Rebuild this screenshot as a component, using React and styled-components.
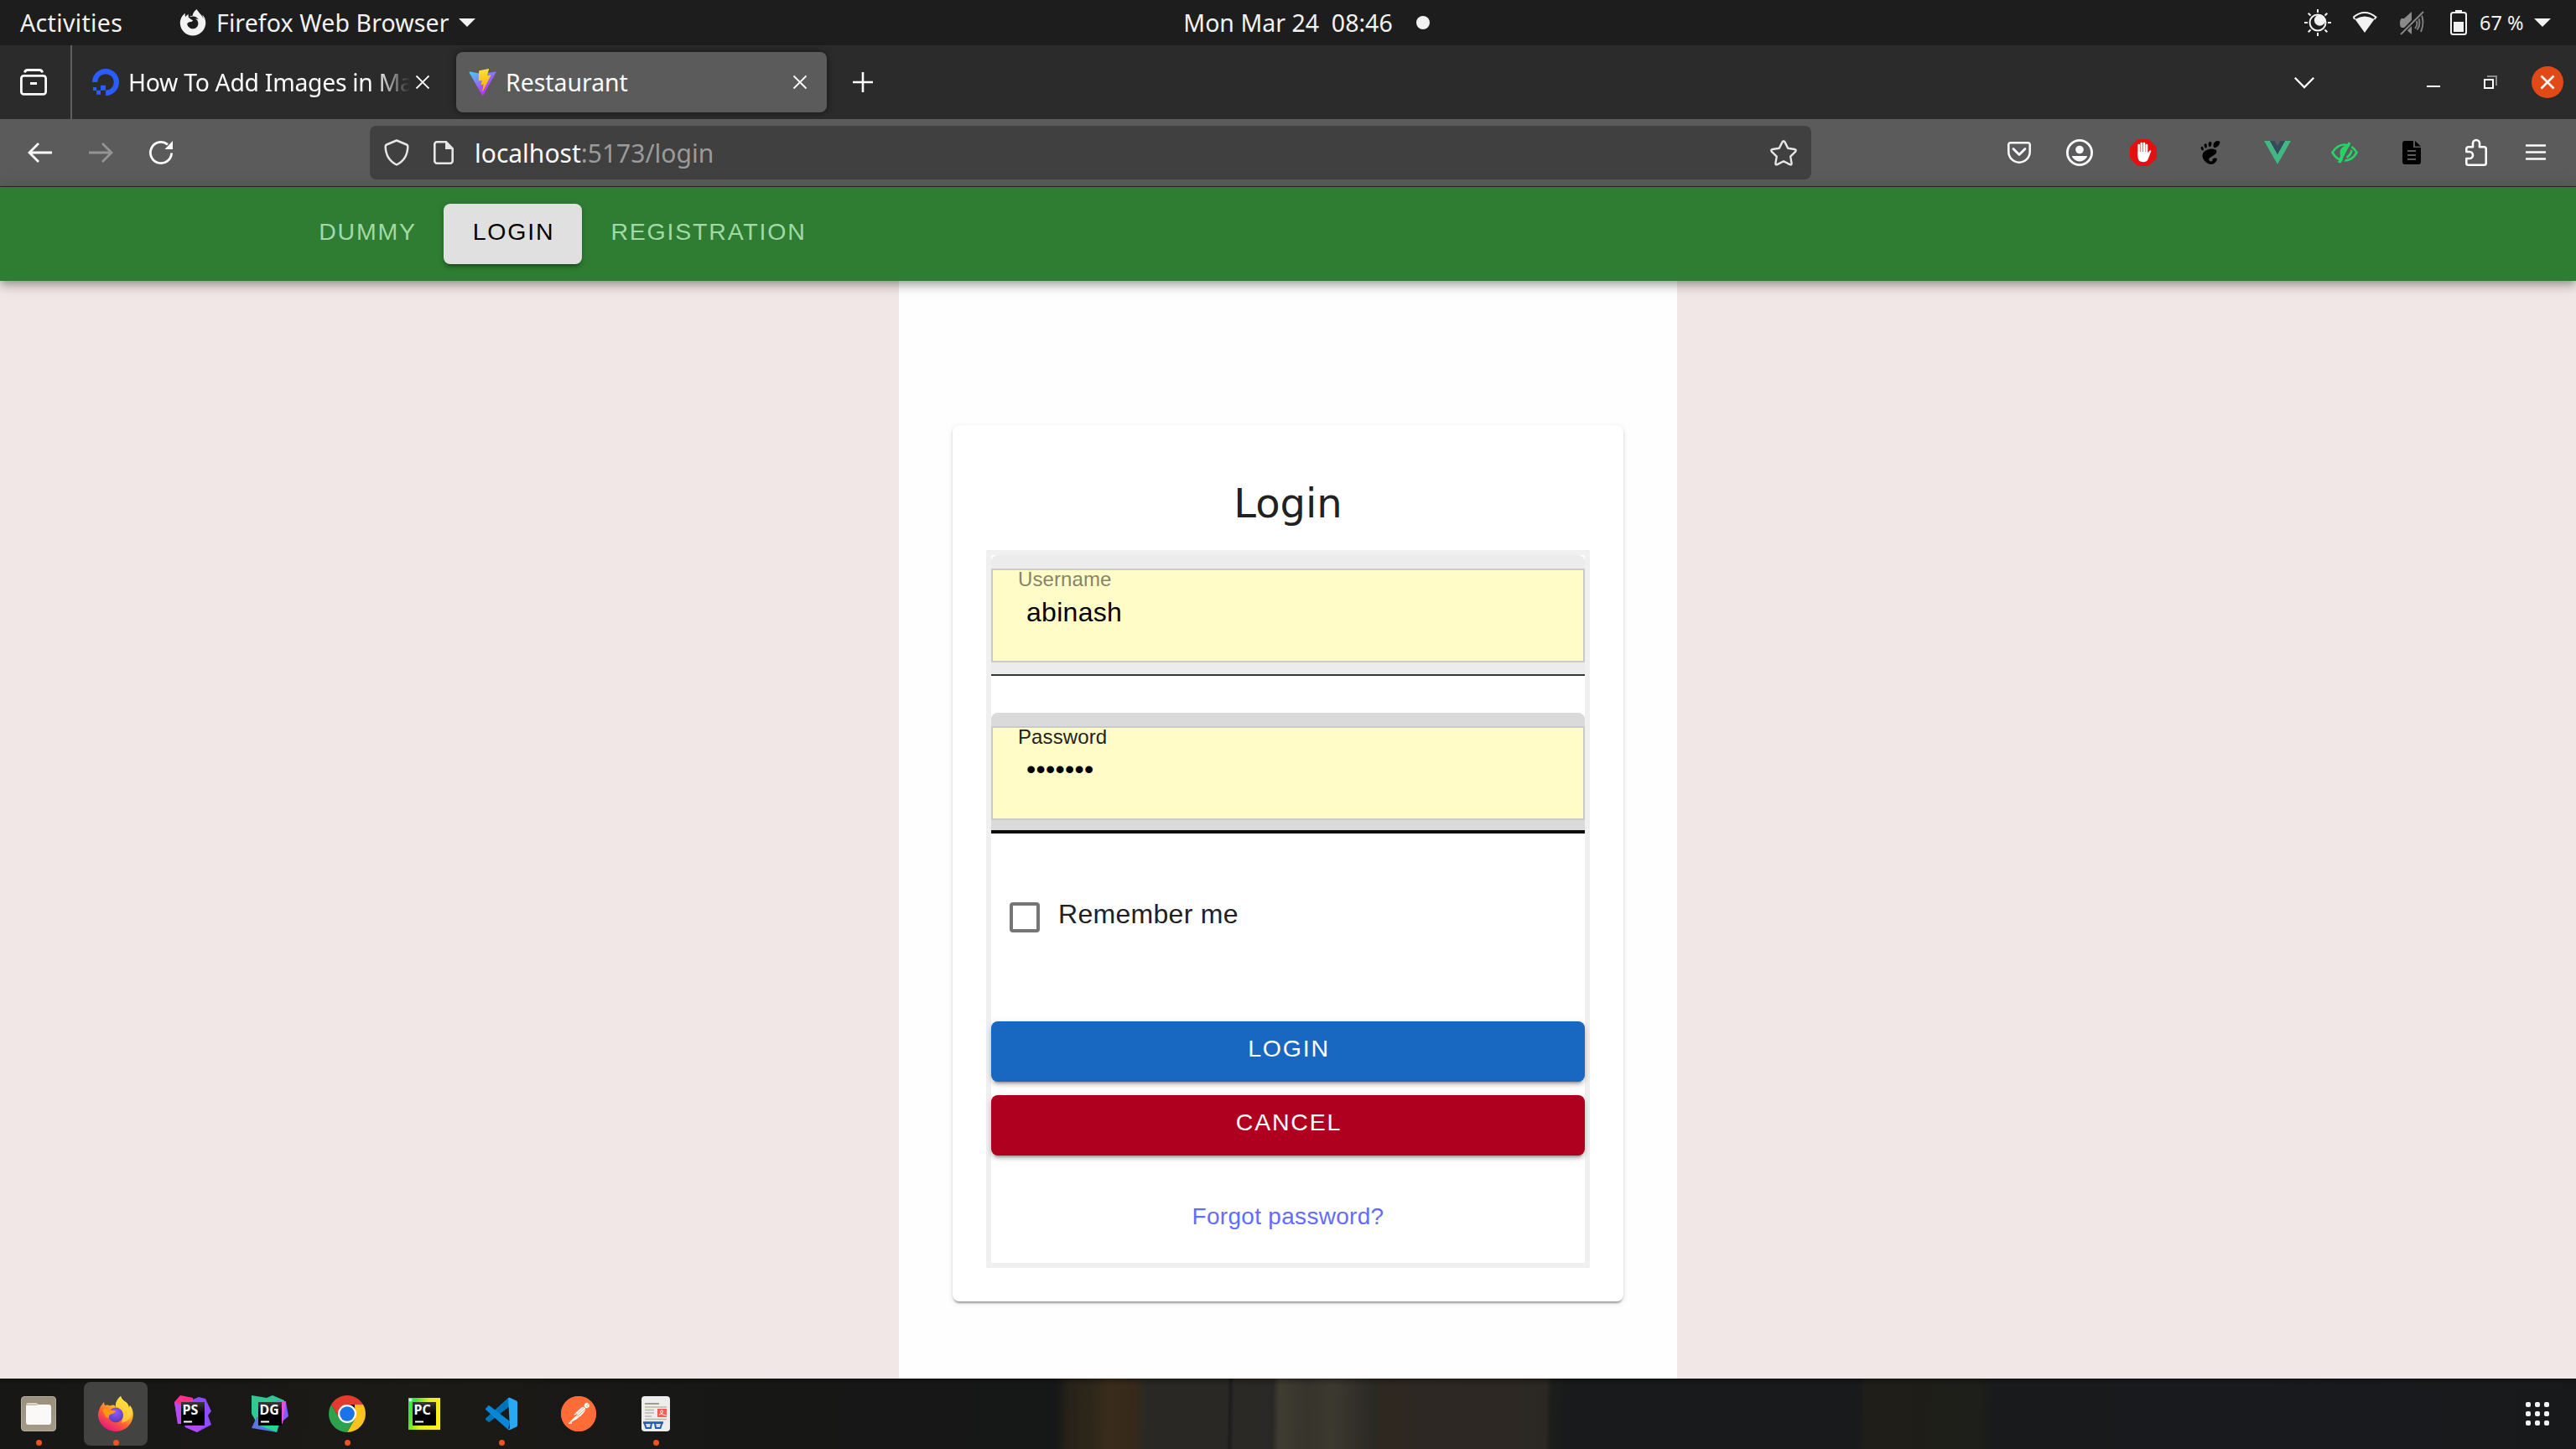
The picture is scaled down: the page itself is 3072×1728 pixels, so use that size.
import React from "react";
import styled, { createGlobalStyle } from "styled-components";
import { FaFirefoxBrowser } from "react-icons/fa";
import { SiGnome, SiPostman } from "react-icons/si";

const UI = `"Noto Sans", "Open Sans", sans-serif`;
const BODY = `"Liberation Sans", Arial, sans-serif`;

const GlobalStyle = createGlobalStyle`
  *, *::before, *::after { box-sizing: border-box; }
  body { margin: 0; background: #f1e7e6; }
`;

const Screen = styled.div`
  width: 3072px;
  height: 1728px;
  display: flex;
  flex-direction: column;
  overflow: hidden;
  font-family: ${BODY};
`;

/* ---------- desktop top bar ---------- */
const TopBar = styled.header`
  flex: none;
  height: 54px;
  display: grid;
  grid-template-columns: 1fr auto 1fr;
  align-items: center;
  background: #1d1d1d;
  color: #f2f2f2;
  font-family: ${UI};
  font-size: 28.5px;
  line-height: 54px;
  white-space: pre;
`;
const TopLeft = styled.div`
  display: flex;
  align-items: center;
  padding-left: 24px;
`;
const Activities = styled.span`
  width: 190px;
  letter-spacing: 0.35px;
`;
const AppMenu = styled.div`
  display: flex;
  align-items: center;
  gap: 11px;
`;
const AppName = styled.span`
  margin-left: 1px;
  letter-spacing: 0.1px;
`;
const Clock = styled.div`
  display: flex;
  align-items: center;
  gap: 28px;
  padding-left: 44px;
`;
const NoticeDot = styled.i`
  width: 16px;
  height: 16px;
  border-radius: 50%;
  background: #f2f2f2;
`;
const TopRight = styled.div`
  display: flex;
  align-items: center;
  justify-content: flex-end;
  padding-right: 30px;
`;
const Percent = styled.span`
  margin-left: 15px;
  width: 55px;
  font-size: 23.5px;
`;
const Pic = styled.svg`
  display: block;
  flex: none;
  width: ${(p) => p.$w}px;
  height: ${(p) => p.$h || p.$w}px;
  margin-left: ${(p) => p.$ml || 0}px;
  overflow: visible;
  fill: none;
`;

/* ---------- browser ---------- */
const TabStrip = styled.div`
  flex: none;
  height: 88px;
  display: flex;
  align-items: center;
  background: #2b2b2b;
  font-family: ${UI};
  font-size: 28.4px;
  color: #fbfbfe;
`;
const RecentTabs = styled.div`
  width: 86px;
  height: 88px;
  padding-left: 24px;
  display: flex;
  align-items: center;
  border-right: 2px solid #5f5f5f;
`;
const Tab = styled.div`
  height: 72px;
  width: ${(p) => p.$w}px;
  display: flex;
  align-items: center;
  padding: 0 ${(p) => p.$pr}px 0 ${(p) => p.$pl}px;
  border-radius: 8px;
  background: ${(p) => (p.$active ? "#5b5b5b" : "transparent")};
  box-shadow: ${(p) => (p.$active ? "0 0 8px rgba(0,0,0,.5)" : "none")};
`;
const TabTitle = styled.span`
  flex: 1;
  min-width: 0;
  margin-left: 11px;
  white-space: nowrap;
  letter-spacing: ${(p) => p.$ls || 0}px;
  mask-image: ${(p) => (p.$fade ? "linear-gradient(to left, transparent, #000 40px)" : "none")};
`;
const WindowControls = styled.div`
  margin-left: auto;
  padding-right: 15px;
  display: flex;
  align-items: center;
`;
const CloseWindow = styled.div`
  width: 38px;
  height: 38px;
  margin-left: 41px;
  display: grid;
  place-items: center;
  border-radius: 50%;
  background: #e14a16;
`;
const Toolbar = styled.div`
  flex: none;
  height: 81px;
  display: flex;
  align-items: center;
  padding: 0 32px 0 33px;
  background: #5b5b5b;
  border-bottom: 1px solid #2e2430;
`;
const NavButtons = styled.div`
  display: flex;
  align-items: center;
  width: 408px;
`;
const UrlBar = styled.div`
  width: 1719px;
  height: 64px;
  display: flex;
  align-items: center;
  padding: 0 17px;
  border-radius: 8px;
  background: #404040;
`;
const Url = styled.span`
  flex: 1;
  margin-left: 25px;
  font-family: ${UI};
  font-size: 30px;
  color: #9b9b9b;
  b { font-weight: 400; color: #fbfbfe; }
`;
const Extensions = styled.div`
  margin-left: auto;
  display: flex;
  align-items: center;
`;
const ExtSlot = styled.div`
  width: 32px;
  height: 32px;
  margin-left: ${(p) => p.$ml || 0}px;
  display: grid;
  place-items: center;
`;

/* ---------- web page ---------- */
const SiteNav = styled.nav`
  flex: none;
  position: relative;
  height: 112px;
  display: flex;
  align-items: center;
  padding-left: 346px;
  background: #2e7d32;
  box-shadow: 0 4px 8px -2px rgba(0, 0, 0, 0.2), 0 8px 10px rgba(0, 0, 0, 0.14),
    0 2px 20px rgba(0, 0, 0, 0.12);
`;
const raised = `0 6px 2px -4px rgba(0,0,0,.2), 0 4px 4px rgba(0,0,0,.14), 0 2px 10px rgba(0,0,0,.12)`;
const Button = styled.button`
  height: 72px;
  width: ${(p) => p.$w || "auto"};
  padding: 0 0 ${(p) => p.$lift}px 2px;
  margin-top: ${(p) => p.$mt || 0}px;
  border: 0;
  border-radius: 8px;
  background: ${(p) => p.$bg || "transparent"};
  color: ${(p) => p.$fg};
  box-shadow: ${(p) => (p.$bg ? raised : "none")};
  font: 400 28.5px/40px ${BODY};
  letter-spacing: 1.8px;
  text-transform: uppercase;
`;
const Page = styled.main`
  flex: 1;
  min-height: 0;
  display: flex;
  justify-content: center;
  background: #f1e7e6;
`;
const Column = styled.div`
  width: 928px;
  padding: 172px 64px 0;
  background: #fefefe;
`;
const Card = styled.section`
  height: 1045px;
  padding: 61px 40px 0;
  border-radius: 8px;
  background: #fff;
  box-shadow: 0 4px 2px -2px rgba(0, 0, 0, 0.2), 0 2px 2px rgba(0, 0, 0, 0.14),
    0 2px 6px rgba(0, 0, 0, 0.12);
`;
const Title = styled.h1`
  margin: 0 0 24px;
  font: 400 48px/64px "DejaVu Sans", sans-serif;
  text-align: center;
  color: #212121;
`;
const Form = styled.div`
  height: 856px;
  display: flex;
  flex-direction: column;
  border: 6px solid #f0f0f0;
`;
const Field = styled.div`
  height: 144px;
  padding-top: 16px;
  margin-bottom: ${(p) => (p.$focused ? 60 : 44)}px;
  border-bottom: ${(p) => (p.$focused ? "4px solid #0c0c0c" : "2px solid #343837")};
  border-radius: 8px 8px 0 0;
  background: ${(p) => (p.$focused ? "#dadada" : "#ececec")};
`;
const InputBox = styled.div`
  height: 112px;
  display: flex;
  flex-direction: column;
  border: 2px solid #cacaca;
  background: #fffcc8;
`;
const FieldLabel = styled.label`
  padding-left: 30px;
  font-size: 24px;
  line-height: 22px;
  letter-spacing: 0.1px;
  color: ${(p) => (p.$focused ? "#23231c" : "#86846a")};
`;
const Value = styled.span`
  margin-top: ${(p) => (p.$masked ? 9 : 10)}px;
  padding-left: 40px;
  font-size: 32px;
  line-height: 36px;
  letter-spacing: 0.3px;
  color: #000;
`;
const Remember = styled.label`
  height: 80px;
  margin-bottom: 84px;
  padding-left: 22px;
  display: flex;
  align-items: center;
  gap: 22px;
  font-size: 32px;
  letter-spacing: 0.3px;
  color: #212121;
  span { padding-bottom: 8px; }
`;
const Checkbox = styled.i`
  width: 36px;
  height: 36px;
  border: 4px solid #767676;
  border-radius: 4px;
`;
const Forgot = styled.a`
  margin: 52px auto 0;
  font-size: 28px;
  line-height: 41px;
  letter-spacing: 0.3px;
  color: #646cff;
`;

/* ---------- dock ---------- */
const Dock = styled.footer`
  flex: none;
  height: 84px;
  display: flex;
  align-items: center;
  padding: 0 31px 0 8px;
  background: linear-gradient(rgba(0, 0, 0, 0.3), transparent 8px),
    linear-gradient(91deg, #171716 0, #1b1a17 500px, #171716 900px, #161717 1258px, #28231a 1276px,
      #2c261a 1300px, #3a2c1b 1322px, #36291b 1352px, #292825 1370px, #292825 1464px,
      #1c1c1b 1467px, #2b2926 1472px, #2a2826 1518px, #3f3c31 1526px, #36342b 1560px,
      #3c392f 1590px, #2b2924 1638px, #2f2820 1650px, #2d2823 1700px, #2b2722 1844px,
      #1c1e1b 1850px, #181a1b 1870px, #181a1b 2218px, #1f1e19 2224px, #1e1e1a 2360px,
      #191a1b 2376px, #191a1e 2700px, #17191a 3072px);
`;
const DockItem = styled.div`
  position: relative;
  width: 76px;
  height: 76px;
  margin-right: 16px;
  display: grid;
  place-items: center;
  border-radius: 8px;
  background: ${(p) => (p.$active ? "#434342" : "transparent")};
  &::after {
    content: "";
    display: ${(p) => (p.$running ? "block" : "none")};
    position: absolute;
    left: 35px;
    bottom: 0;
    width: 7px;
    height: 7px;
    border-radius: 50%;
    background: #e95420;
  }
`;
const FilesIcon = styled.div`
  width: 42px;
  height: 42px;
  display: grid;
  place-items: center;
  border-radius: 4px;
  border: 1px solid #b5ad9c;
  background: linear-gradient(#9a917d, #a39b88);
`;
const PostmanBadge = styled.div`
  width: 42px;
  height: 42px;
  display: grid;
  border-radius: 50%;
  background: radial-gradient(#fff 60%, #ff6c37 62%);
  color: #ff6c37;
`;
const AppGrid = styled.div`
  margin-left: auto;
  margin-right: 1px;
  display: grid;
  grid-template-columns: repeat(3, 6px);
  gap: 5px;
  i { width: 6px; height: 6px; border-radius: 2px; background: #f2f2f2; }
`;

/* ---------- icons ---------- */
const Caret = ({ ml }) => (
  <Pic $w={20} $h={10} $ml={ml} viewBox="0 0 20 10"><path d="M0 0h20L10 10z" fill="#f2f2f2" /></Pic>
);
const Cross = ({ ml, w = 1.8 }) => (
  <Pic $w={16} $ml={ml} viewBox="0 0 16 16"><path d="M.5.5l15 15M15.5.5l-15 15" stroke="#fbfbfe" strokeWidth={w} /></Pic>
);
const Arrow = ({ flip, color, ml }) => (
  <Pic $w={29} $h={24} $ml={ml} viewBox="0 0 29 24">
    <path transform={flip ? "translate(29 0) scale(-1 1)" : undefined} d="M29 12H2M13 1L2 12l11 11" stroke={color} strokeWidth="2.8" />
  </Pic>
);
const TileText = styled.text`
  font: 700 16px "Noto Sans", sans-serif;
  fill: #fff;
`;
const JetTile = ({ text }) => (
  <g>
    <rect x="8" y="8" width="28" height="28" fill="url(#tile)" />
    <TileText x="9.5" y="23.3">{text}</TileText>
    <rect x="11" y="30.5" width="10" height="2" fill="#fff" />
  </g>
);

function SystemIcons() {
  return (
    <>
      <Pic $w={32} viewBox="0 0 32 32">
        <g stroke="#f2f2f2" strokeWidth="2">
          <circle cx="16" cy="16" r="9.5" />
          <path d="M16 0v4M16 28v4M0 16h4M28 16h4M4.7 4.7l2.8 2.8M24.5 24.5l2.8 2.8M4.7 27.3l2.8-2.8M24.5 7.5l2.8-2.8" />
        </g>
        <circle cx="18.5" cy="13.2" r="6.6" fill="#f2f2f2" />
      </Pic>
      <Pic $w={30} $h={26} $ml={25} viewBox="0 0 30 26">
        <path d="M15 25L3.500 9Q15 2 26.500 9z" fill="#f2f2f2" />
        <path d="M1.500 6.500Q15-4.500 28.500 6.500L26.500 9M1.500 6.500L3.500 9" stroke="#f2f2f2" strokeWidth="2" />
      </Pic>
      <Pic $w={29} $h={27} $ml={27} viewBox="0 0 29 27">
        <path d="M2 8h3l9-8v27l-9-8H2q-2-1-2-5.500T2 8z" fill="#8a8a8a" />
        <path d="M18 8q5 6 0 12M20.500 4.500q6 9 0 17M25 2q5 10 0 22" stroke="#7d7d7d" strokeWidth="2" />
        <path d="M27 0L1 27" stroke="#1d1d1d" strokeWidth="5" /><path d="M28 0L1 27" stroke="#8a8a8a" strokeWidth="1.800" />
      </Pic>
      <Pic $w={20} $h={30} $ml={31} viewBox="0 0 20 30">
        <rect x="1" y="3" width="18" height="26" rx="2.500" stroke="#f2f2f2" strokeWidth="2" />
        <path d="M6 0h8v3H6zM4 14h12v12H4z" fill="#f2f2f2" />
      </Pic>
    </>
  );
}

function Browser() {
  return (
    <>
      <TabStrip>
        <RecentTabs>
          <Pic $w={32} viewBox="0 0 32 32">
            <path d="M5.500 4.500Q6 1.500 9 1.500h14q3 0 3.500 3" stroke="#fbfbfe" strokeWidth="2.800" />
            <rect x="1.400" y="8.400" width="29.200" height="22" rx="3" stroke="#fbfbfe" strokeWidth="2.800" />
            <path d="M12 16h8v3h-8z" fill="#fbfbfe" />
          </Pic>
        </RecentTabs>
        <Tab $w={458} $pl={24} $pr={32}>
          <Pic $w={32} viewBox="0 0 32 32">
            <path d="M16 32v-6.200A9.800 9.800 0 1 0 6.200 16H0A16 16 0 1 1 16 32z" fill="#2b5cff" />
            <path d="M10 19.800h6v6h-6zM5 25.800h5v5H5zM1 22h4v4H1z" fill="#2b5cff" />
          </Pic>
          <TabTitle $fade $ls={-0.3}>How To Add Images in Ma</TabTitle>
          <Cross ml={7} />
        </Tab>
        <Tab $active $w={442} $pl={15} $pr={24}>
          <Pic $w={33} $h={32} viewBox="0 0 256 257">
            <defs>
              <linearGradient id="vA" x1="0" y1="0" x2=".6" y2=".8"><stop stopColor="#41d1ff" /><stop offset="1" stopColor="#bd34fe" /></linearGradient>
              <linearGradient id="vB" x1=".4" y1="0" x2=".5" y2="1"><stop stopColor="#ffea83" /><stop offset=".08" stopColor="#ffdd35" /><stop offset="1" stopColor="#ffa800" /></linearGradient>
            </defs>
            <path fill="url(#vA)" d="M255.153 37.938L134.897 252.976c-2.483 4.440-8.862 4.466-11.382.048L.875 37.958c-2.746-4.814 1.371-10.646 6.827-9.670l120.385 21.517a6.537 6.537 0 0 0 2.322-.004l117.867-21.483c5.438-.991 9.574 4.796 6.877 9.620Z" />
            <path fill="url(#vB)" d="M185.432.063L96.440 17.501a3.268 3.268 0 0 0-2.634 3.014l-5.474 92.456a3.268 3.268 0 0 0 3.997 3.378l24.777-5.718c2.318-.535 4.413 1.507 3.936 3.838l-7.361 36.047c-.495 2.426 1.782 4.500 4.151 3.780l15.304-4.649c2.372-.720 4.652 1.360 4.150 3.788l-11.698 56.621c-.732 3.542 3.979 5.473 5.943 2.437l1.313-2.028l72.516-144.720c1.215-2.423-.880-5.186-3.540-4.672l-25.505 4.922c-2.396.462-4.435-1.770-3.759-4.114l16.646-57.705c.677-2.350-1.370-4.583-3.769-4.113Z" />
          </Pic>
          <TabTitle>Restaurant</TabTitle>
          <Cross />
        </Tab>
        <Pic $w={24} $ml={31} viewBox="0 0 24 24"><path d="M12 0v24M0 12h24" stroke="#fbfbfe" strokeWidth="2.600" /></Pic>
        <WindowControls>
          <Pic $w={24} $h={13} viewBox="0 0 24 13"><path d="M.8.8L12 12 23.200.8" stroke="#fbfbfe" strokeWidth="2.300" /></Pic>
          <Pic $w={16} $ml={134} viewBox="0 0 16 16"><path d="M0 13h16" stroke="#fff" strokeWidth="2" /></Pic>
          <Pic $w={16} $ml={52} viewBox="0 0 16 16"><path d="M4 1h11v11" stroke="#8c8c8c" strokeWidth="2" /><path d="M1 5h10v10H1z" stroke="#fff" strokeWidth="2" /></Pic>
          <CloseWindow><Cross w={2.6} /></CloseWindow>
        </WindowControls>
      </TabStrip>
      <Toolbar>
        <NavButtons>
          <Arrow color="#fbfbfe" />
          <Arrow flip color="#949494" ml={44} />
          <Pic $w={28} $ml={43} viewBox="0 0 28 28">
            <path d="M26.600 14.500A12.600 12.600 0 1 1 22 4.300" stroke="#fbfbfe" strokeWidth="2.800" />
            <path d="M28 0v10H18.500z" fill="#fbfbfe" />
          </Pic>
        </NavButtons>
        <UrlBar>
          <Pic $w={30} $h={32} viewBox="0 0 30 32"><path d="M15 1.500L27 6.500Q28.500 7.200 28.300 9C28 19 24 26 15 30.500 6 26 2 19 1.700 9 1.500 7.200 3 6.500 3 6.500z" stroke="#e6e6e6" strokeWidth="2.500" strokeLinejoin="round" /></Pic>
          <Pic $w={24} $h={28} $ml={29} viewBox="0 0 24 28"><path d="M4 1.300h11l7.700 8V24a2.700 2.700 0 0 1-2.700 2.700H4A2.700 2.700 0 0 1 1.300 24V4A2.700 2.700 0 0 1 4 1.300z" stroke="#e6e6e6" strokeWidth="2.600" /><path d="M14 1v9h9z" fill="#e6e6e6" /></Pic>
          <Url><b>localhost</b>:5173/login</Url>
          <Pic $w={32} $h={30} viewBox="0 0 32 30"><path d="M14.500 2.400q1.500-2.200 3 0l3.700 7.400 7.900 1.200q2.600.6 1 2.800l-5.900 5.800 1.400 8q.2 2.500-2.200 1.500L16 25.200l-7.400 3.900q-2.400 1-2.200-1.500l1.400-8-5.900-5.800q-1.600-2.200 1-2.800l7.900-1.200z" stroke="#e6e6e6" strokeWidth="2.400" strokeLinejoin="round" /></Pic>
        </UrlBar>
        <Extensions>
          <ExtSlot>
            <Pic $w={28} $h={26} viewBox="0 0 28 26"><path d="M3.500 1.300h21a2.200 2.200 0 0 1 2.200 2.200V12a12.700 12.700 0 0 1-25.400 0V3.500a2.200 2.200 0 0 1 2.200-2.200z" stroke="#fbfbfe" strokeWidth="2.500" /><path d="M7 8.500l7 7 7-7" stroke="#fbfbfe" strokeWidth="2.800" strokeLinecap="round" strokeLinejoin="round" /></Pic>
          </ExtSlot>
          <ExtSlot $ml={40}>
            <Pic $w={32} viewBox="0 0 32 32"><circle cx="16" cy="16" r="14.600" stroke="#fbfbfe" strokeWidth="2.800" /><circle cx="16" cy="12.500" r="4.800" fill="#fbfbfe" /><path d="M7.500 20h17q1.200 0 0 1.800Q21 26.500 16 26.500T7.500 21.800Q6.300 20 7.500 20z" fill="#fbfbfe" /></Pic>
          </ExtSlot>
          <ExtSlot $ml={44}>
            <Pic $w={32} viewBox="0 0 32 32">
              <path d="M9.500 0h13L32 9.500v13L22.500 32h-13L0 22.500v-13z" fill="#e60f0f" />
              <path d="M10.600 7v12M13.800 5v12M17 5v12M20 7v12" stroke="#fff" strokeWidth="2.600" strokeLinecap="round" />
              <path d="M9.300 15h12v2l2-3.300q2.200-1 2 .6l-3.300 8.700q-1.500 4.300-6 4.300-6.700 0-6.700-7z" fill="#fff" />
            </Pic>
          </ExtSlot>
          <ExtSlot $ml={48}><SiGnome size={28} color="#000" /></ExtSlot>
          <ExtSlot $ml={48}>
            <Pic $w={32} $h={28} viewBox="0 0 32 28"><path d="M0 0h7l9 16 9-16h7L16 28z" fill="#41b883" /><path d="M7 0h5.500L16 6l3.500-6H25l-9 16z" fill="#35495e" /></Pic>
          </ExtSlot>
          <ExtSlot $ml={48}>
            <Pic $w={32} $h={24} viewBox="0 0 32 24">
              <path d="M1.500 12Q7 2.500 16 2.500T30.500 12Q25 21.500 16 21.500T1.500 12z" stroke="#25d366" strokeWidth="2.600" />
              <path d="M11 16q-2-9 5-12l5-3-9 23H8z" fill="#25d366" />
              <path d="M24.500 2L14 23" stroke="#5b5b5b" strokeWidth="2.600" /><path d="M22 0L9.500 24" stroke="#25d366" strokeWidth="3" /><path d="M24.500 9q-1 6-6 9" stroke="#25d366" strokeWidth="2.600" />
            </Pic>
          </ExtSlot>
          <ExtSlot $ml={48}>
            <Pic $w={22} $h={28} viewBox="0 0 22 28"><path d="M3 0h10v8h9v17q0 3-3 3H3q-3 0-3-3V3q0-3 3-3z" fill="#000" /><path d="M15 0l7 6.500h-7z" fill="#000" /><path d="M6 12h10M6 17h10M6 22h10" stroke="#5b5b5b" strokeWidth="2" /></Pic>
          </ExtSlot>
          <ExtSlot $ml={45}>
            <Pic $w={26} $h={32} viewBox="0 0 26 32"><path d="M3.500 9.300H9V5a4 4 0 0 1 8 0v4.300h5.500a2.200 2.200 0 0 1 2.200 2.200v17a2.200 2.200 0 0 1-2.200 2.200h-19a2.200 2.200 0 0 1-2.200-2.200V23H5a4 4 0 0 0 0-8H1.300v-3.500a2.200 2.200 0 0 1 2.200-2.200z" stroke="#fbfbfe" strokeWidth="2.600" strokeLinejoin="round" /></Pic>
          </ExtSlot>
          <ExtSlot $ml={39}>
            <Pic $w={24} $h={20} viewBox="0 0 24 20"><path d="M0 1.500h24M0 9.500h24M0 17.500h24" stroke="#fbfbfe" strokeWidth="2.600" /></Pic>
          </ExtSlot>
        </Extensions>
      </Toolbar>
    </>
  );
}

function DockBar() {
  return (
    <Dock>
      <DockItem $running>
        <FilesIcon>
          <Pic $w={30} $h={26} viewBox="0 0 30 26"><path d="M0 3q0-3 3-3h9q2 0 3 2.500H0z" fill="#dcd6cb" /><path d="M0 3h12l3-1h12q3 0 3 3v18q0 3-3 3H3q-3 0-3-3z" fill="#faf9f7" /></Pic>
        </FilesIcon>
      </DockItem>
      <DockItem $active $running>
        <Pic $w={42} viewBox="0 0 42 42">
          <defs>
            <linearGradient id="ffA" x1=".85" y1=".1" x2=".3" y2="1"><stop stopColor="#fff44f" /><stop offset=".35" stopColor="#ffb02e" /><stop offset=".65" stopColor="#ff5a36" /><stop offset="1" stopColor="#e31587" /></linearGradient>
            <radialGradient id="ffB" cx=".5" cy=".3" r=".7"><stop stopColor="#9059ff" /><stop offset="1" stopColor="#5b3bb5" /></radialGradient>
            <linearGradient id="tile" x1="0" y1="0" x2="0" y2="1"><stop stopColor="#3a3a3a" /><stop offset=".5" stopColor="#000" /></linearGradient>
          </defs>
          <path d="M27 0q1 4 6 7 3 2 4 7l1-3q4 5 3.800 12C41 34 32 42 21 42S0 33 0 22Q.5 14 7 7q0 3 1.500 4Q11 10 14 11.500 20 9 20.500 13 21 4 27 0z" fill="url(#ffA)" />
          <path d="M27 0q-7 6-6 12 8 2 9 11l-2 9Q40 29 41 19q-.5-5-3-8l-1 3q-1-5-4-7-5-3-6-7z" fill="#ffd93d" opacity=".75" />
          <circle cx="21" cy="22.500" r="9" fill="url(#ffB)" />
          <path d="M5 16q4-2 10 .5l6 1q-1 3-6 4-3 2-2 5-5-1-6-6z" fill="#ff980e" />
        </Pic>
      </DockItem>
      <DockItem>
        <Pic $w={44} viewBox="0 0 44 44">
          <path d="M7 0l15 3 4 30-22 1L0 8z" fill="#ff318c" /><path d="M0 8l8 4v22H4z" fill="#b74af7" /><path d="M22 5l7-3 8 2 7 15-4 5 4 11-17 9-14-6z" fill="#8f4bff" /><path d="M12 36h24l-9 8-14-6z" fill="#af4bf0" />
          <JetTile text="PS" />
        </Pic>
      </DockItem>
      <DockItem>
        <Pic $w={44} viewBox="0 0 44 44">
          <path d="M0 0l18 3 7-3 14 6-4 30H8L0 22z" fill="#30c893" /><path d="M30 6l11 2 3 17-12 10z" fill="#7b5cff" /><path d="M24 7h17l-4 27-9-3z" fill="#ef4ce0" /><path d="M6 26L0 39l30 5 5-14z" fill="#5876e8" /><path d="M10 36h22l-2 8z" fill="#21d789" />
          <JetTile text="DG" />
        </Pic>
      </DockItem>
      <DockItem $running>
        <Pic $w={44} viewBox="0 0 44 44">
          <path d="M3 11A22 22 0 0 1 41 11H22L12.500 27.500z" fill="#e33b2e" />
          <path d="M41 11A22 22 0 0 1 22 44l9.500-16.500L31 11z" fill="#fcc31e" />
          <path d="M3 11A22 22 0 0 0 22 44l9.500-16.500-19 0z" fill="#2da14c" />
          <circle cx="22" cy="22" r="11" fill="#fff" /><circle cx="22" cy="22" r="8.800" fill="#1a73e8" />
        </Pic>
      </DockItem>
      <DockItem>
        <Pic $w={44} viewBox="0 0 44 44">
          <defs><linearGradient id="pc" x1="0" y1="0" x2="1" y2=".35"><stop stopColor="#21ee5a" /><stop offset=".25" stopColor="#4be32f" /><stop offset=".6" stopColor="#e6ee1c" /><stop offset="1" stopColor="#fcee21" /></linearGradient></defs>
          <rect x="3" y="3" width="38" height="38" fill="url(#pc)" /><circle cx="5.500" cy="5.500" r="2" fill="#c8f5dc" />
          <JetTile text="PC" />
        </Pic>
      </DockItem>
      <DockItem $running>
        <Pic $w={38} viewBox="0 0 38 38">
          <path d="M0 24.500L27 0l2 10L5 28.500 3.500 29 0 26z" fill="#0073b7" /><path d="M0 13L3.500 9 5 9.500 29 28l-2 10L0 14z" fill="#0a86d6" />
          <path d="M27 0q1.500-.5 3 .3l7 3.200q1 .7 1 2v27q0 1.300-1 2l-7 3.200q-1.500.8-3 .3l2-2z" fill="#29a9f2" />
        </Pic>
      </DockItem>
      <DockItem><PostmanBadge><SiPostman size={42} /></PostmanBadge></DockItem>
      <DockItem $running>
        <Pic $w={42} viewBox="0 0 42 42">
          <rect x="4" y="0" width="34" height="42" rx="4" fill="#ededed" />
          <path d="M8 9h17" stroke="#a39c87" strokeWidth="2" /><path d="M8 13h26M8 16.500h11M8 20h11M8 24h8M8 27.500h26" stroke="#bdb8a8" strokeWidth="1.500" />
          <rect x="23" y="15" width="11" height="10" fill="#ff5a50" /><path d="M25 22q5-1 4.500-4t-3 0q0 4 7 5" stroke="#fff" strokeWidth="1" />
          <path d="M6 31.500h24" stroke="#1f5fae" strokeWidth="2.500" /><path d="M7.500 32h8.500l-1 6H9.500zM20 32h8.500l-2 6H21z" stroke="#1f5fae" strokeWidth="2" fill="#d5dce5" />
        </Pic>
      </DockItem>
      <AppGrid>{Array.from({ length: 9 }, (_, i) => <i key={i} />)}</AppGrid>
    </Dock>
  );
}

export default function App() {
  return (
    <Screen>
      <GlobalStyle />
      <TopBar>
        <TopLeft>
          <Activities>Activities</Activities>
          <AppMenu>
            <FaFirefoxBrowser size={32} />
            <AppName>Firefox Web Browser</AppName>
            <Caret />
          </AppMenu>
        </TopLeft>
        <Clock>
          <span>Mon Mar 24{"  "}08:46</span>
          <NoticeDot />
        </Clock>
        <TopRight>
          <SystemIcons />
          <Percent>67 %</Percent>
          <Caret ml={10} />
        </TopRight>
      </TopBar>
      <Browser />
      <SiteNav>
        <Button $w="183px" $lift={6} $fg="#a3d9a5">Dummy</Button>
        <Button $w="165px" $lift={6} $bg="#e0e0e0" $fg="#000">Login</Button>
        <Button $w="300px" $lift={6} $fg="#a3d9a5">Registration</Button>
      </SiteNav>
      <Page>
        <Column>
          <Card>
            <Title>Login</Title>
            <Form>
              <Field>
                <InputBox>
                  <FieldLabel>Username</FieldLabel>
                  <Value>abinash</Value>
                </InputBox>
              </Field>
              <Field $focused>
                <InputBox>
                  <FieldLabel $focused>Password</FieldLabel>
                  <Value $masked>•••••••</Value>
                </InputBox>
              </Field>
              <Remember>
                <Checkbox />
                <span>Remember me</span>
              </Remember>
              <Button $w="100%" $lift={8} $bg="#1867c0" $fg="#fff">Login</Button>
              <Button $w="100%" $lift={8} $mt={16} $bg="#b00020" $fg="#fff">Cancel</Button>
              <Forgot>Forgot password?</Forgot>
            </Form>
          </Card>
        </Column>
      </Page>
      <DockBar />
    </Screen>
  );
}
